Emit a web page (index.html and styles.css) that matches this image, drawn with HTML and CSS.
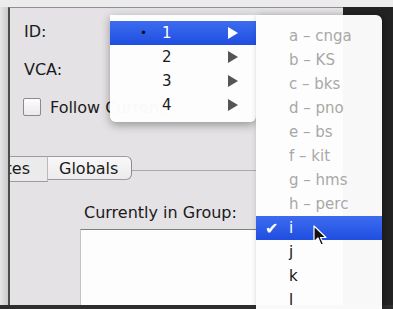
FILE: index.html
```html
<!DOCTYPE html>
<html lang="en">

<head>
    <meta charset="UTF-8">
    <title>Group Menu</title>
    <link rel="stylesheet" href="styles.css">
</head>

<body>
    <div class="screen">
        <div class="top-strip"></div>
        <div class="desk">
            <div class="gutter"></div>
            <div class="window">
                <div class="field">ID:</div>
                <div class="field vca">VCA:</div>
                <label class="check-row">
                    <span class="checkbox"></span>
                    <span>Follow Current</span>
                </label>

                <div class="tabs">
                    <div class="tab tab-first">Notes</div>
                    <div class="tab tab-last">Globals</div>
                    <div class="tab-line"></div>
                </div>

                <div class="pane">
                    <div class="pane-label">Currently in Group:</div>
                    <div class="listbox"></div>
                </div>
            </div>
            <div class="dark"></div>
        </div>
        <div class="bottom-strip"></div>

        <ul class="menu menu-main">
            <li class="item selected"><span class="mark">&bull;</span><span class="num">1</span><span class="arrow"></span></li>
            <li class="item"><span class="mark"></span><span class="num">2</span><span class="arrow"></span></li>
            <li class="item"><span class="mark"></span><span class="num">3</span><span class="arrow"></span></li>
            <li class="item"><span class="mark"></span><span class="num">4</span><span class="arrow"></span></li>
        </ul>

        <ul class="menu menu-sub">
            <li class="sub-item disabled"><span class="check"></span>a &ndash; cnga</li>
            <li class="sub-item disabled"><span class="check"></span>b &ndash; KS</li>
            <li class="sub-item disabled"><span class="check"></span>c &ndash; bks</li>
            <li class="sub-item disabled"><span class="check"></span>d &ndash; pno</li>
            <li class="sub-item disabled"><span class="check"></span>e &ndash; bs</li>
            <li class="sub-item disabled"><span class="check"></span>f &ndash; kit</li>
            <li class="sub-item disabled"><span class="check"></span>g &ndash; hms</li>
            <li class="sub-item disabled"><span class="check"></span>h &ndash; perc</li>
            <li class="sub-item selected"><span class="check">&#10004;</span>i</li>
            <li class="sub-item"><span class="check"></span>j</li>
            <li class="sub-item"><span class="check"></span>k</li>
            <li class="sub-item"><span class="check"></span>l</li>
        </ul>

        <svg class="cursor" width="14" height="22" viewBox="0 0 14 22">
            <path d="M1 1 L1 17 L5 13 L8 20 L10.5 19 L7.5 12.5 L13 12.5 Z" fill="#111" stroke="#fff" stroke-width="1.2" stroke-linejoin="round"/>
        </svg>
    </div>
</body>

</html>
```

FILE: styles.css
```css
body {
    margin: 0;
    font-family: 'DejaVu Sans', 'Liberation Sans', sans-serif;
    color: #1a1a1a;
    background: #ebebeb;
}

.screen {
    position: relative;
    width: 393px;
    height: 309px;
    overflow: hidden;
}

.top-strip {
    height: 7px;
    background: #ececec;
}

.desk {
    display: flex;
    height: 298px;
}

.gutter {
    width: 8px;
    background: linear-gradient(to right, #e6e6e6, #c9c9c9);
}

.window {
    width: 333px;
    border-left: 2px solid #4c4c4c;
    border-top: 1px solid #8e8e8e;
    background: #e4e2e5;
    overflow: hidden;
    font-size: 16px;
}

.dark {
    flex: 1;
    background: #232323;
}

.bottom-strip {
    height: 4px;
    background: #2e2e2e;
}

.field {
    padding: 14px 0 0 14px;
    height: 20px;
    line-height: 20px;
}

.vca {
    padding-top: 18px;
}

.check-row {
    display: flex;
    align-items: center;
    gap: 9px;
    margin: 17px 0 0 13px;
    height: 20px;
    white-space: nowrap;
}

.checkbox {
    width: 16px;
    height: 16px;
    border: 1px solid #8a8a8a;
    border-radius: 2px;
    background: linear-gradient(#fdfdfd, #e9e9e9);
}

.tabs {
    display: flex;
    align-items: flex-start;
    margin: 39px 0 0 -40px;
    height: 26px;
}

.tab {
    height: 24px;
    line-height: 24px;
    border-top: 1px solid #9c9c9c;
    border-bottom: 1px solid #9c9c9c;
    white-space: nowrap;
}

.tab-first {
    width: 60px;
    padding-right: 17px;
    text-align: right;
    background: #ebebeb;
    border-right: 1px solid #b9b9b9;
}

.tab-last {
    width: 84px;
    padding-left: 11px;
    box-sizing: border-box;
    background: linear-gradient(#f8f8f8, #ececec);
    border-right: 1px solid #8c8c8c;
    border-radius: 0 6px 6px 0;
}

.tab-line {
    flex: 1;
    margin-top: 14px;
    border-top: 1px solid #a9a9a9;
}

.pane {
    padding: 21px 0 0 70px;
}

.pane-label {
    padding-left: 4px;
    height: 20px;
    line-height: 20px;
}

.listbox {
    margin-top: 6px;
    height: 84px;
    background: #fdfdfd;
    border-top: 1px solid #7e7e7e;
    border-left: 1px solid #c4c4c4;
}

.menu {
    position: absolute;
    margin: 0;
    padding: 0;
    list-style: none;
    background: rgba(253, 253, 253, 0.98);
    font-size: 15px;
}

.menu-main {
    left: 110px;
    top: 15px;
    width: 146px;
    padding: 6px 0 5px;
    border-radius: 0 0 6px 6px;
    box-shadow: 0 3px 10px rgba(0, 0, 0, 0.35);
}

.item {
    display: flex;
    align-items: center;
    height: 24px;
    color: #1a1a1a;
}

.item .mark {
    width: 37px;
    text-align: right;
    font-size: 12px;
    color: #111;
}

.item .num {
    width: 81px;
    padding-left: 15px;
    box-sizing: border-box;
}

.arrow {
    width: 0;
    height: 0;
    border-top: 6px solid transparent;
    border-bottom: 6px solid transparent;
    border-left: 10px solid #555;
}

.menu .selected {
    background: linear-gradient(#3d6cf1, #1f4ee0);
    color: #fff;
}

.item.selected .arrow {
    border-left-color: #fff;
}

.menu-sub {
    left: 256px;
    top: 15px;
    width: 126px;
    height: 300px;
    padding-top: 9px;
    border-radius: 0 6px 0 0;
    box-shadow: 2px 0 6px rgba(0, 0, 0, 0.3);
}

.sub-item {
    display: flex;
    align-items: center;
    height: 24px;
    color: #111;
    white-space: nowrap;
}

.sub-item.disabled {
    color: #a8a8a8;
}

.check {
    width: 33px;
    padding-left: 9px;
    box-sizing: border-box;
    font-size: 16px;
}

.cursor {
    position: absolute;
    left: 313px;
    top: 225px;
}
```
